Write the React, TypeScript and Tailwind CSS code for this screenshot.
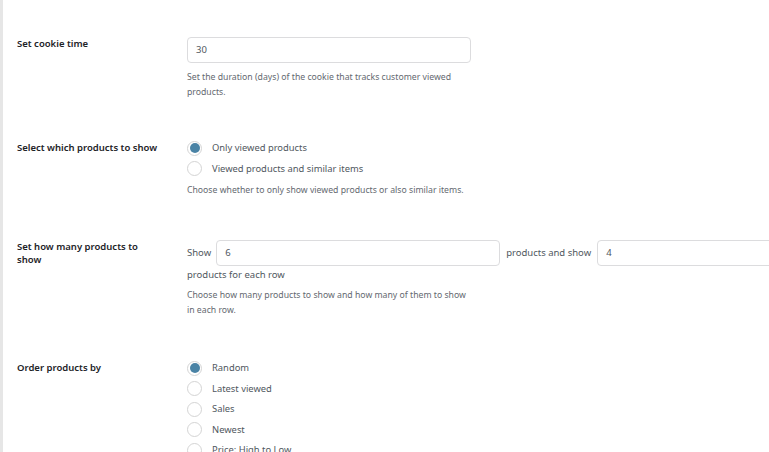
const font = { fontFamily: '"Noto Sans", "Open Sans", sans-serif' };

const Radio = ({ label, checked }: { label: string; checked?: boolean }) => (
  <label className="flex h-[20.5px] items-center">
    <span className="flex h-[15px] w-[15px] items-center justify-center rounded-full border border-[#d4d4d4] bg-white">
      {checked && <span className="h-[10px] w-[10px] rounded-full bg-[#4a83a5]" />}
    </span>
    <span className="ml-[10px] text-[9.4px] text-[#50575e]">{label}</span>
  </label>
);

const TextInput = ({ value, className }: { value: string; className: string }) => (
  <div
    className={`flex h-[26px] items-center rounded-[4px] border border-[#dcdcde] bg-white px-[8px] text-[9.5px] text-[#50575e] ${className}`}
  >
    {value}
  </div>
);

const Row = ({
  label,
  labelPad,
  children,
}: {
  label: string;
  labelPad: string;
  children: React.ReactNode;
}) => (
  <div className="flex">
    <div
      className={`w-[184px] shrink-0 pl-[14px] pr-[27px] text-[9.5px] font-semibold leading-[13px] text-[#1d2327] ${labelPad}`}
    >
      {label}
    </div>
    <div className="min-w-0 flex-1">{children}</div>
  </div>
);

const Desc = ({ children, className }: { children: React.ReactNode; className: string }) => (
  <p className={`w-[283px] text-[8.7px] leading-[15px] text-[#646970] ${className}`}>{children}</p>
);

export default function App() {
  return (
    <div
      style={font}
      className="h-[452px] w-[769px] overflow-hidden border-l-[3px] border-[#e6e6e6] bg-white"
    >
      <div className="pt-[37px]">
        <Row label="Set cookie time" labelPad="pt-0">
          <TextInput value="30" className="w-[284px]" />
          <Desc className="mt-[7px]">
            Set the duration (days) of the cookie that tracks customer viewed products.
          </Desc>
        </Row>

        <div className="mt-[38px]">
          <Row label="Select which products to show" labelPad="pt-[3px]">
            <Radio label="Only viewed products" checked />
            <Radio label="Viewed products and similar items" />
            <Desc className="mt-[4px]">
              Choose whether to only show viewed products or also similar items.
            </Desc>
          </Row>
        </div>

        <div className="mt-[42px]">
          <Row label="Set how many products to show" labelPad="pt-0">
            <div className="flex items-center text-[9.5px] text-[#50575e]">
              <span className="mr-[5px]">Show</span>
              <TextInput value="6" className="w-[284px] shrink-0" />
              <span className="mx-[6px] shrink-0">products and show</span>
              <TextInput value="4" className="w-[200px] shrink-0" />
            </div>
            <div className="mt-[2px] text-[9.5px] leading-[14px] text-[#50575e]">
              products for each row
            </div>
            <Desc className="mt-[6px]">
              Choose how many products to show and how many of them to show in each row.
            </Desc>
          </Row>
        </div>

        <div className="mt-[40px]">
          <Row label="Order products by" labelPad="pt-[3px]">
            <Radio label="Random" checked />
            <Radio label="Latest viewed" />
            <Radio label="Sales" />
            <Radio label="Newest" />
            <Radio label="Price: High to Low" />
          </Row>
        </div>
      </div>
    </div>
  );
}
